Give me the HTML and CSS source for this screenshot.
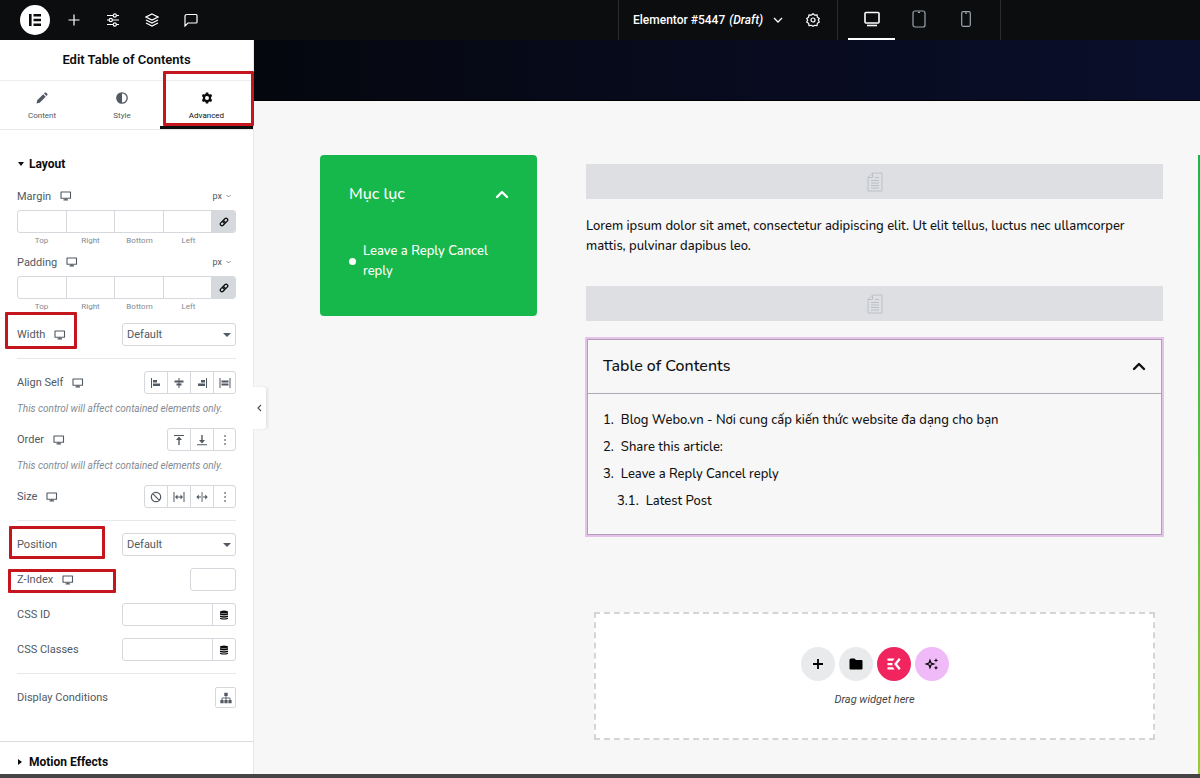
FILE: index.html
```html
<!DOCTYPE html>
<html lang="vi">

<head>
    <meta charset="UTF-8">
    <meta name="viewport" content="width=device-width, initial-scale=1.0">
    <title>Elementor #5447</title>
    <link rel="stylesheet" href="styles.css">
</head>

<body>
    <!-- Shared icons -->
    <svg class="sprite" aria-hidden="true">
        <symbol id="i-desktop" viewBox="0 0 12 10">
            <path d="M1 1h9.500v6.200H1z" fill="none" stroke="currentColor" stroke-width="1.100" stroke-linejoin="round" />
            <path d="M3.500 8.900h4.500M5.800 7.200v1.700" fill="none" stroke="currentColor" stroke-width="1.200" />
        </symbol>
        <symbol id="i-chevron" viewBox="0 0 10 6">
            <path d="M1 1l4 4 4-4" fill="none" stroke="currentColor" stroke-width="1.300" />
        </symbol>
        <symbol id="i-link" viewBox="0 0 12 12">
            <g fill="none" stroke="currentColor" stroke-width="1.500" transform="rotate(-45 6 6)">
                <rect x="0.500" y="4" width="6.500" height="4" rx="2" />
                <rect x="5" y="4" width="6.500" height="4" rx="2" />
            </g>
        </symbol>
        <symbol id="i-db" viewBox="0 0 10 10">
            <ellipse cx="5" cy="1.900" rx="4" ry="1.500" />
            <path d="M1 3.100q4 1.700 8 0v1.600q-4 1.500-8 0zM1 5.500q4 1.600 8 0v1.500q-4 1.500-8 0zM1 7.800q4 1.600 8 0v.9q-4 1.800-8 0z" />
        </symbol>
        <symbol id="i-up" viewBox="0 0 14 10">
            <path d="M2 8l5-5 5 5" fill="none" stroke="currentColor" stroke-width="2.400" stroke-linecap="round" stroke-linejoin="round" />
        </symbol>
        <symbol id="i-doc" viewBox="0 0 16 20">
            <path d="M5.500 1H15v18H1V5.500zM5.500 1v4.500H1M4 8.500h8M4 11h8M4 13.500h8M4 16h8M8 5.500h4" fill="none" stroke="currentColor" />
        </symbol>
        <symbol id="i-dots" viewBox="0 0 12 12">
            <path d="M5.300 1.200h1.500v1.500H5.300zM5.300 5.200h1.500v1.500H5.300zM5.300 9.200h1.500v1.500H5.300z" />
        </symbol>
    </svg>

    <header class="topbar">
        <div class="topbar-tools">
            <button class="logo" aria-label="Menu">
                <svg width="14" height="14" viewBox="0 0 14 14"><path d="M1 1h2.600v12H1zM5.500 1H13v2.400H5.500zM5.500 5.800H13v2.400H5.500zM5.500 10.600H13V13H5.500z" /></svg>
            </button>
            <button class="tool" aria-label="Add element">
                <svg width="12" height="12" viewBox="0 0 12 12"><path d="M6 .5v11M.5 6h11" /></svg>
            </button>
            <button class="tool" aria-label="Site settings">
                <svg width="14" height="14" viewBox="0 0 14 14"><path d="M1 2.500h6M10.500 2.500H13M1 7h2M6.500 7H13M1 11.500h6M10.500 11.500H13" /><circle cx="8.800" cy="2.500" r="1.600" /><circle cx="4.800" cy="7" r="1.600" /><circle cx="8.800" cy="11.500" r="1.600" /></svg>
            </button>
            <button class="tool" aria-label="Structure">
                <svg width="14" height="14" viewBox="0 0 14 14"><path d="M7 1l6 3-6 3-6-3zM1 7l6 3 6-3M1 10l6 3 6-3" /></svg>
            </button>
            <button class="tool" aria-label="Notes">
                <svg width="14" height="14" viewBox="0 0 14 14"><path d="M3 1.500h9q1 0 1 1V9q0 1-1 1H4l-3 3V3.500q0-2 2-2z" /></svg>
            </button>
        </div>
        <div class="topbar-doc">
            <button class="doc-name">Elementor #5447 <em>(Draft)</em>
                <svg width="10" height="6"><use href="#i-chevron" /></svg>
            </button>
            <button class="tool" aria-label="Page settings">
                <svg width="14" height="14" viewBox="0 0 14 14"><path d="M7 .7l1.700 1.500 2.300-.3.400 2.300 1.900 1.300L12.300 7l1 2-1.900 1.300-.4 2.200-2.300-.2L7 13.300l-1.700-1-2.300.2-.4-2.200L.7 9l1-2-1-1.500 1.900-1.300L3 1.900l2.300.3z" /><circle cx="7" cy="7" r="2" /></svg>
            </button>
        </div>
        <div class="topbar-devices">
            <button class="device active" aria-label="Desktop">
                <svg width="16" height="16" viewBox="0 0 16 16"><rect x="1" y="1.500" width="14" height="10.500" rx="1" /><path d="M3 14.500h10" /></svg>
            </button>
            <button class="device" aria-label="Tablet">
                <svg width="14" height="18" viewBox="0 0 14 18"><rect x="1" y="1" width="12" height="16" rx="2" /><path d="M6 2.300h2" /></svg>
            </button>
            <button class="device" aria-label="Mobile">
                <svg width="10" height="16" viewBox="0 0 10 16"><rect x=".7" y=".7" width="8.600" height="14.600" rx="1.500" /><path d="M4 2.200h2" /></svg>
            </button>
        </div>
        <div class="topbar-end"></div>
    </header>

    <div class="editor">
        <aside class="panel">
            <h1 class="panel-title">Edit Table of Contents</h1>
            <nav class="tabs">
                <button class="tab">
                    <svg width="12" height="12" viewBox="0 0 12 12"><path d="M.5 11.500l.7-3.200 6-6 2.500 2.500-6 6zM8 1.500l.9-.9q.6-.4 1.100 0l1.400 1.400q.4.600 0 1.100l-.9.9z" /></svg>
                    Content
                </button>
                <button class="tab">
                    <svg width="12" height="12" viewBox="0 0 12 12"><circle cx="6" cy="6" r="5.200" fill="none" stroke="currentColor" stroke-width="1.300" /><path d="M6 .8a5.200 5.200 0 0 0 0 10.400z" /></svg>
                    Style
                </button>
                <button class="tab active">
                    <svg width="12" height="12" viewBox="0 0 12 12"><path fill-rule="evenodd" d="M4.800.4h2.400l.3 1.500 1.100.6 1.400-.5 1.200 2.100-1.100 1v1.800l1.100 1L10 10l-1.400-.5-1.100.6-.3 1.500H4.800l-.3-1.500-1.100-.6L2 10 .8 7.900l1.100-1V5.100l-1.100-1L2 2l1.400.5 1.100-.6zM6 4a2 2 0 1 0 0 4 2 2 0 0 0 0-4z" /></svg>
                    Advanced
                    <span class="mark mark-tab"></span>
                </button>
            </nav>

            <section class="section">
                <h2 class="section-title"><span class="caret-down"></span>Layout</h2>
                <div class="controls">
                    <fieldset class="dimensions">
                        <div class="dimensions-head">
                            <span class="label">Margin <svg class="monitor"><use href="#i-desktop" /></svg></span>
                            <button class="unit">px <svg width="5" height="4"><use href="#i-chevron" /></svg></button>
                        </div>
                        <div class="dimensions-inputs">
                            <input type="text" id="m-top"><input type="text" id="m-right"><input type="text" id="m-bottom"><input type="text" id="m-left">
                            <button class="link" aria-label="Link values"><svg width="10" height="10"><use href="#i-link" /></svg></button>
                        </div>
                        <div class="dimensions-names">
                            <label for="m-top">Top</label><label for="m-right">Right</label><label for="m-bottom">Bottom</label><label for="m-left">Left</label>
                        </div>
                    </fieldset>
                    <fieldset class="dimensions">
                        <div class="dimensions-head">
                            <span class="label">Padding <svg class="monitor"><use href="#i-desktop" /></svg></span>
                            <button class="unit">px <svg width="5" height="4"><use href="#i-chevron" /></svg></button>
                        </div>
                        <div class="dimensions-inputs">
                            <input type="text" id="p-top"><input type="text" id="p-right"><input type="text" id="p-bottom"><input type="text" id="p-left">
                            <button class="link" aria-label="Link values"><svg width="10" height="10"><use href="#i-link" /></svg></button>
                        </div>
                        <div class="dimensions-names">
                            <label for="p-top">Top</label><label for="p-right">Right</label><label for="p-bottom">Bottom</label><label for="p-left">Left</label>
                        </div>
                    </fieldset>
                    <div class="control">
                        <label class="label" for="width">Width <svg class="monitor"><use href="#i-desktop" /></svg></label>
                        <span class="select"><select id="width"><option>Default</option></select></span>
                        <span class="mark mark-width"></span>
                    </div>
                    <hr>
                    <div>
                        <div class="control">
                            <span class="label">Align Self <svg class="monitor"><use href="#i-desktop" /></svg></span>
                            <div class="choices">
                                <button aria-label="Start"><svg viewBox="0 0 12 12"><path d="M1 1h1v10H1zM3 3h4v2.500H3zM3 6.500h7V9H3z" /></svg></button>
                                <button aria-label="Center"><svg viewBox="0 0 12 12"><path d="M5.500 1h1v10h-1zM1.500 3.500h9v2h-9zM3.500 6.500h5v2h-5z" /></svg></button>
                                <button aria-label="End"><svg viewBox="0 0 12 12"><path d="M10 1h1v10h-1zM5 3h4v2.500H5zM2 6.500h7V9H2z" /></svg></button>
                                <button aria-label="Stretch"><svg viewBox="0 0 12 12"><path d="M.5 1h1v10h-1zM10.500 1h1v10h-1zM2.500 3.500h7v2h-7zM2.500 6.500h7v2h-7z" /></svg></button>
                            </div>
                        </div>
                        <p class="description">This control will affect contained elements only.</p>
                    </div>
                    <div>
                        <div class="control">
                            <span class="label">Order <svg class="monitor"><use href="#i-desktop" /></svg></span>
                            <div class="choices">
                                <button aria-label="First"><svg viewBox="0 0 12 12"><path d="M1 1h10v1H1zM6 2.500L9 6H6.700v5H5.300V6H3z" /></svg></button>
                                <button aria-label="Last"><svg viewBox="0 0 12 12"><path d="M1 10.200h10v1H1zM6 9.500L9 6H6.700V1H5.300v5H3z" /></svg></button>
                                <button aria-label="Custom"><svg><use href="#i-dots" /></svg></button>
                            </div>
                        </div>
                        <p class="description">This control will affect contained elements only.</p>
                    </div>
                    <div class="control">
                        <span class="label">Size <svg class="monitor"><use href="#i-desktop" /></svg></span>
                        <div class="choices">
                            <button aria-label="None"><svg viewBox="0 0 12 12"><path d="M2.700 2.700l6.600 6.600M6 1.300a4.700 4.700 0 1 0 0 9.400 4.700 4.700 0 0 0 0-9.400z" fill="none" stroke="currentColor" stroke-width="1.200" /></svg></button>
                            <button aria-label="Grow"><svg viewBox="0 0 12 12"><path d="M.5 1h1v10h-1zM10.500 1h1v10h-1zM2 6l2.500-2.500v2h3v-2L10 6 7.500 8.500v-2h-3v2z" /></svg></button>
                            <button aria-label="Shrink"><svg viewBox="0 0 12 12"><path d="M5.600 1h.9v10h-.9zM.3 6l2.500-2.500v1.900H5v1.200H2.800v1.900zM11.700 6L9.200 3.500v1.900H7v1.200h2.200v1.900z" /></svg></button>
                            <button aria-label="Custom"><svg><use href="#i-dots" /></svg></button>
                        </div>
                    </div>
                    <hr>
                    <div class="control">
                        <label class="label" for="position">Position</label>
                        <span class="select"><select id="position"><option>Default</option></select></span>
                        <span class="mark mark-position"></span>
                    </div>
                    <div class="control">
                        <label class="label" for="z-index">Z-Index <svg class="monitor"><use href="#i-desktop" /></svg></label>
                        <input class="number" type="text" id="z-index">
                        <span class="mark mark-zindex"></span>
                    </div>
                    <div class="control">
                        <label class="label" for="css-id">CSS ID</label>
                        <span class="dynamic">
                            <input type="text" id="css-id">
                            <button aria-label="Dynamic tags"><svg width="10" height="10"><use href="#i-db" /></svg></button>
                        </span>
                    </div>
                    <div class="control">
                        <label class="label" for="css-classes">CSS Classes</label>
                        <span class="dynamic">
                            <input type="text" id="css-classes">
                            <button aria-label="Dynamic tags"><svg width="10" height="10"><use href="#i-db" /></svg></button>
                        </span>
                    </div>
                    <hr>
                    <div class="control">
                        <span class="label">Display Conditions</span>
                        <button class="conditions" aria-label="Display conditions">
                            <svg width="12" height="12" viewBox="0 0 12 12"><path d="M4.300.8h3.400v3.200H4.300zM.4 8h3.200v3.200H.4zM4.400 8h3.200v3.200H4.400zM8.400 8h3.200v3.200H8.400z" /><path d="M6 4v4M2 8V6h8v2" fill="none" stroke="currentColor" stroke-width=".9" /></svg>
                        </button>
                    </div>
                </div>
            </section>
            <section class="section">
                <h2 class="section-title closed"><span class="caret-right"></span>Motion Effects</h2>
            </section>
            <button class="collapse" aria-label="Hide panel"><svg width="5" height="8" viewBox="0 0 5 8"><path d="M4 1L1 4l3 3" fill="none" stroke="currentColor" stroke-width="1.200" /></svg></button>
        </aside>

        <main class="canvas">
            <div class="hero"></div>
            <div class="page">
                <div class="toc-card">
                    <div class="toc-card-head">
                        <h3>Mục lục</h3>
                        <svg width="14" height="10"><use href="#i-up" /></svg>
                    </div>
                    <ul>
                        <li><a href="#respond">Leave a Reply Cancel reply</a></li>
                    </ul>
                </div>
                <div class="content">
                    <div class="placeholder"><svg width="16" height="20"><use href="#i-doc" /></svg></div>
                    <p class="text">Lorem ipsum dolor sit amet, consectetur adipiscing elit. Ut elit tellus, luctus nec ullamcorper mattis, pulvinar dapibus leo.</p>
                    <div class="placeholder"><svg width="16" height="20"><use href="#i-doc" /></svg></div>
                    <div class="toc">
                        <div class="toc-head">
                            <h3>Table of Contents</h3>
                            <svg width="14" height="10"><use href="#i-up" /></svg>
                        </div>
                        <ol>
                            <li><a href="#blog">Blog Webo.vn - Nơi cung cấp kiến thức website đa dạng cho bạn</a></li>
                            <li><a href="#share">Share this article:</a></li>
                            <li><a href="#respond">Leave a Reply Cancel reply</a>
                                <ol>
                                    <li><a href="#latest">Latest Post</a></li>
                                </ol>
                            </li>
                        </ol>
                    </div>
                    <div class="dropzone">
                        <div class="dropzone-buttons">
                            <button aria-label="Add container"><svg width="12" height="12" viewBox="0 0 12 12"><path d="M6 1v10M1 6h10" fill="none" stroke="currentColor" stroke-width="1.800" /></svg></button>
                            <button aria-label="Add template"><svg width="14" height="12" viewBox="0 0 14 12"><path d="M2 .5h3.500L7 2h5.500q1 0 1 1v7.500q0 1-1 1h-11q-1 0-1-1V2q0-1.500 1.500-1.500z" /></svg></button>
                            <button class="kit" aria-label="ElementsKit"><svg width="14" height="12" viewBox="0 0 14 12"><path d="M.5.500h7L6 2.800H.5zM.5 4.900h5v2.300h-5zM.5 9.200H6l1.500 2.300h-7z" /><path d="M12.800.8L8.600 6l4.200 5.200" fill="none" stroke="currentColor" stroke-width="2.300" /></svg></button>
                            <button class="ai" aria-label="Build with AI"><svg width="14" height="12" viewBox="0 0 14 12"><path d="M5 2.200l1 2.800 2.800 1L6 7 5 9.800 4 7 1.200 6 4 5z" fill="none" stroke="currentColor" stroke-width="1.200" /><path d="M11 .2l.6 1.600 1.600.6-1.600.6-.6 1.600-.6-1.600-1.600-.6 1.600-.6zM11 7.600l.6 1.600 1.600.6-1.600.6-.6 1.600-.6-1.600-1.600-.6 1.600-.6z" /></svg></button>
                        </div>
                        <p>Drag widget here</p>
                    </div>
                </div>
                <div class="side"></div>
            </div>
        </main>
    </div>
    <footer class="bottom-edge"></footer>
</body>

</html>
```

FILE: styles.css
```css
:root {
    --dark: #0c0d0e;
    --text: #515962;
    --line: #d5d8dc;
    --green: #17b84b;
    --red: #c4161c;
    --ui-font: Roboto, sans-serif;
    --page-font: Nunito, Lato, "Noto Sans", sans-serif;
}

* {
    box-sizing: border-box;
}

body {
    display: flex;
    flex-direction: column;
    height: 100vh;
    margin: 0;
    overflow: hidden;
    font-family: var(--ui-font);
    font-size: 11px;
    color: var(--text);
    background-color: #f7f7f7;
}

h1,
h2,
h3,
p,
ul,
ol {
    margin: 0;
    padding: 0;
}

button,
input,
select {
    margin: 0;
    padding: 0;
    font-family: inherit;
    color: inherit;
    background: none;
    border: none;
    border-radius: 0;
}

button {
    display: flex;
    align-items: center;
    justify-content: center;
    cursor: pointer;
}

svg {
    flex: none;
    fill: currentColor;
}

.sprite {
    position: absolute;
    width: 0;
    height: 0;
}

/* Top bar */
.topbar {
    display: flex;
    flex: none;
    height: 40px;
    color: #fff;
    background-color: var(--dark);
}

.topbar-tools {
    display: flex;
    flex: 1;
    align-items: center;
    padding-left: 20px;
}

.logo {
    width: 30px;
    height: 30px;
    margin-right: 4px;
    border-radius: 50%;
    color: var(--dark);
    background-color: #fff;
}

.tool {
    width: 39px;
    height: 40px;
}

.tool svg,
.device svg {
    fill: none;
    stroke: currentColor;
    stroke-width: 1.2;
}

.topbar-doc {
    display: flex;
    align-items: center;
    width: 219px;
    padding-left: 14px;
    border-left: 1px solid #2a2c2e;
}

.doc-name {
    gap: 4px;
    width: 160px;
    justify-content: flex-start;
    font-size: 12px;
    font-weight: 500;
    white-space: nowrap;
}

.doc-name svg {
    margin-left: 6px;
}

.topbar-devices {
    display: flex;
    width: 164px;
    padding-left: 10px;
    border: solid #2a2c2e;
    border-width: 0 1px;
}

.device {
    width: 47px;
    height: 40px;
    color: #9da5ae;
    border-bottom: 2px solid transparent;
}

.device.active {
    color: #fff;
    border-bottom-color: #fff;
}

.device.active svg {
    stroke-width: 1.6;
}

.topbar-end {
    width: 199px;
}

/* Side panel */
.editor {
    display: flex;
    flex: 1;
    min-height: 0;
}

.panel {
    position: relative;
    flex: none;
    width: 254px;
    background-color: #fff;
    border-right: 1px solid #e6e8ea;
}

.panel-title {
    height: 41px;
    font-size: 13px;
    font-weight: 600;
    line-height: 40px;
    text-align: center;
    color: var(--dark);
    border-bottom: 1px solid #eceef0;
}

.tabs {
    display: grid;
    grid-template-columns: 84px 76px 1fr;
    height: 49px;
    border-bottom: 1px solid #e6e8ea;
}

.tab {
    position: relative;
    flex-direction: column;
    gap: 7px;
    height: 48px;
    padding-top: 4px;
    font-size: 8px;
    border-bottom: 3px solid transparent;
}

.tab.active {
    color: var(--dark);
    border-bottom-color: var(--dark);
}

.section {
    border-bottom: 1px solid #d9dcdf;
}

.section-title {
    display: flex;
    align-items: center;
    gap: 5px;
    height: 61px;
    padding: 6px 18px 0;
    font-size: 12px;
    font-weight: 700;
    color: var(--dark);
}

.section-title.closed {
    height: 40px;
    padding-top: 0;
}

.caret-down {
    border: 3px solid transparent;
    border-top: 4px solid var(--dark);
    border-bottom: none;
}

.caret-right {
    margin-right: 2px;
    border: 3px solid transparent;
    border-left: 4px solid var(--dark);
    border-right: none;
}

.controls {
    display: flex;
    flex-direction: column;
    gap: 12px;
    padding: 0 17px 32px;
}

.controls hr {
    width: 100%;
    height: 1px;
    margin: 0;
    border: none;
    background-color: #e6e8ea;
}

.control {
    position: relative;
    display: flex;
    align-items: center;
    justify-content: space-between;
    height: 23px;
}

.label {
    display: flex;
    align-items: center;
    gap: 9px;
}

.monitor {
    width: 12px;
    height: 10px;
}

.dimensions {
    min-width: 0;
    margin: 0;
    padding: 0;
    border: none;
}

.dimensions-head {
    display: flex;
    align-items: center;
    justify-content: space-between;
    height: 10px;
    margin-bottom: 9px;
}

.unit {
    gap: 4px;
    padding-right: 5px;
    font-size: 9px;
}

.dimensions-inputs {
    display: flex;
    height: 23px;
    border: 1px solid var(--line);
    border-radius: 3px;
    overflow: hidden;
}

.dimensions-inputs input {
    flex: 1;
    min-width: 0;
    border-right: 1px solid var(--line);
}

.link {
    width: 23px;
    color: var(--dark);
    background-color: var(--line);
}

.dimensions-names {
    display: flex;
    margin-top: 3px;
    padding-right: 23px;
    font-size: 8px;
    line-height: 9px;
    text-align: center;
    color: #818a96;
}

.dimensions-names label {
    flex: 1;
}

.select {
    position: relative;
    width: 114px;
}

.select::after {
    content: "";
    position: absolute;
    top: 10px;
    right: 5px;
    border: 4px solid transparent;
    border-top-color: var(--text);
    border-bottom: none;
    pointer-events: none;
}

.select select {
    width: 100%;
    height: 23px;
    padding: 0 4px;
    font-size: 11px;
    appearance: none;
    border: 1px solid var(--line);
    border-radius: 3px;
}

.choices {
    display: flex;
    height: 23px;
    border: 1px solid var(--line);
    border-radius: 3px;
}

.choices button {
    width: 23px;
}

.choices button:first-child,
.choices button:last-child {
    width: 22px;
}

.choices button + button {
    border-left: 1px solid var(--line);
}

.choices svg {
    width: 12px;
    height: 12px;
}

.description {
    margin-top: 7px;
    font-size: 10px;
    font-style: italic;
    line-height: 15px;
    color: #818a96;
}

.number {
    width: 46px;
    height: 23px;
    border: 1px solid var(--line);
    border-radius: 3px;
}

.dynamic {
    display: flex;
    width: 114px;
    height: 23px;
    border: 1px solid var(--line);
    border-radius: 3px;
}

.dynamic input {
    flex: 1;
    min-width: 0;
}

.dynamic button {
    width: 23px;
    color: var(--dark);
    border-left: 1px solid var(--line);
}

.conditions {
    width: 21px;
    height: 21px;
    border: 1px solid var(--line);
    border-radius: 2px;
}

.collapse {
    position: absolute;
    top: 347px;
    left: 253px;
    width: 13px;
    height: 42px;
    background-color: #fff;
    border-radius: 0 3px 3px 0;
    box-shadow: 2px 0 3px rgba(0, 0, 0, 0.08);
}

/* Red highlight frames */
.mark {
    position: absolute;
    border: 3px solid var(--red);
    border-radius: 1px;
    pointer-events: none;
}

.mark-tab {
    top: -10px;
    left: 3px;
    right: -1px;
    height: 55px;
}

.mark-width {
    top: -11px;
    left: -12px;
    width: 72px;
    height: 37px;
}

.mark-position {
    top: -7px;
    left: -8px;
    width: 96px;
    height: 33px;
}

.mark-zindex {
    top: 1px;
    left: -9px;
    width: 108px;
    height: 24px;
}

/* Page preview */
.canvas {
    flex: 1;
    display: flex;
    flex-direction: column;
    min-width: 0;
    overflow: hidden;
    font-family: var(--page-font);
    font-size: 13px;
    font-weight: 500;
    color: #111;
}

.canvas a {
    color: inherit;
    text-decoration: none;
}

.canvas h3 {
    font-size: 16px;
    font-weight: 500;
}

.hero {
    height: 61px;
    background: linear-gradient(90deg, #05070f, #0a0f2c);
    border-bottom: 1px solid #000;
}

.page {
    display: flex;
    flex: 1;
    align-items: flex-start;
    padding: 54px 0 0 66px;
}

.toc-card {
    width: 217px;
    height: 161px;
    padding: 28px 28px 28px 29px;
    color: #fff;
    background-color: var(--green);
    border-radius: 4px;
}

.toc-card-head {
    display: flex;
    align-items: center;
    justify-content: space-between;
    height: 22px;
    margin-bottom: 36px;
}

.toc-card ul {
    list-style: none;
}

.toc-card li {
    display: flex;
    align-items: center;
    gap: 7px;
    line-height: 20px;
}

.toc-card li::before {
    content: "";
    flex: none;
    width: 7px;
    height: 7px;
    border-radius: 50%;
    background-color: #fff;
}

.content {
    flex: 1;
    min-width: 0;
    margin: 9px 34px 0 48px;
}

.placeholder {
    display: flex;
    align-items: center;
    justify-content: center;
    height: 35px;
    margin: 0 1px;
    color: #bcc0c6;
    background-color: #dddfe3;
}

.text {
    margin: 17px 1px 30px;
    line-height: 20px;
}

.toc {
    height: 200px;
    margin-top: 16px;
    border: 2px solid #e3c4e8;
    outline: 1px solid #b59abb;
    outline-offset: -3px;
}

.toc-head {
    display: flex;
    align-items: center;
    justify-content: space-between;
    height: 55px;
    padding: 0 16px;
    border-bottom: 1px solid #a9adb3;
}

.toc ol {
    padding: 0 16px;
    list-style: none;
    line-height: 27px;
    counter-reset: item;
}

.toc > ol {
    padding-top: 13px;
}

.toc ol ol {
    padding-left: 14px;
}

.toc li {
    counter-increment: item;
}

.toc li::before {
    content: counters(item, ".") ".";
    margin-right: 7px;
}

.dropzone {
    display: flex;
    flex-direction: column;
    align-items: center;
    justify-content: center;
    gap: 11px;
    height: 128px;
    margin: 75px 9px 0;
    padding-top: 2px;
    background-color: #fff;
    border: 2px dashed #d5d5d8;
}

.dropzone p {
    font-family: var(--ui-font);
    font-size: 11px;
    font-style: italic;
    font-weight: 400;
    line-height: 16px;
    color: #444;
}

.dropzone-buttons {
    display: flex;
    gap: 4px;
}

.dropzone-buttons button {
    width: 34px;
    height: 34px;
    border-radius: 50%;
    color: #000;
    background-color: #e8eaeb;
}

.dropzone-buttons .kit {
    color: #fff;
    background-color: #f0255f;
}

.dropzone-buttons .ai {
    background-color: #f0b9f7;
}

.side {
    align-self: stretch;
    width: 2px;
    background: linear-gradient(#17b84b, #9acd32);
}

.bottom-edge {
    flex: none;
    height: 4px;
    background-color: #454545;
}
```
